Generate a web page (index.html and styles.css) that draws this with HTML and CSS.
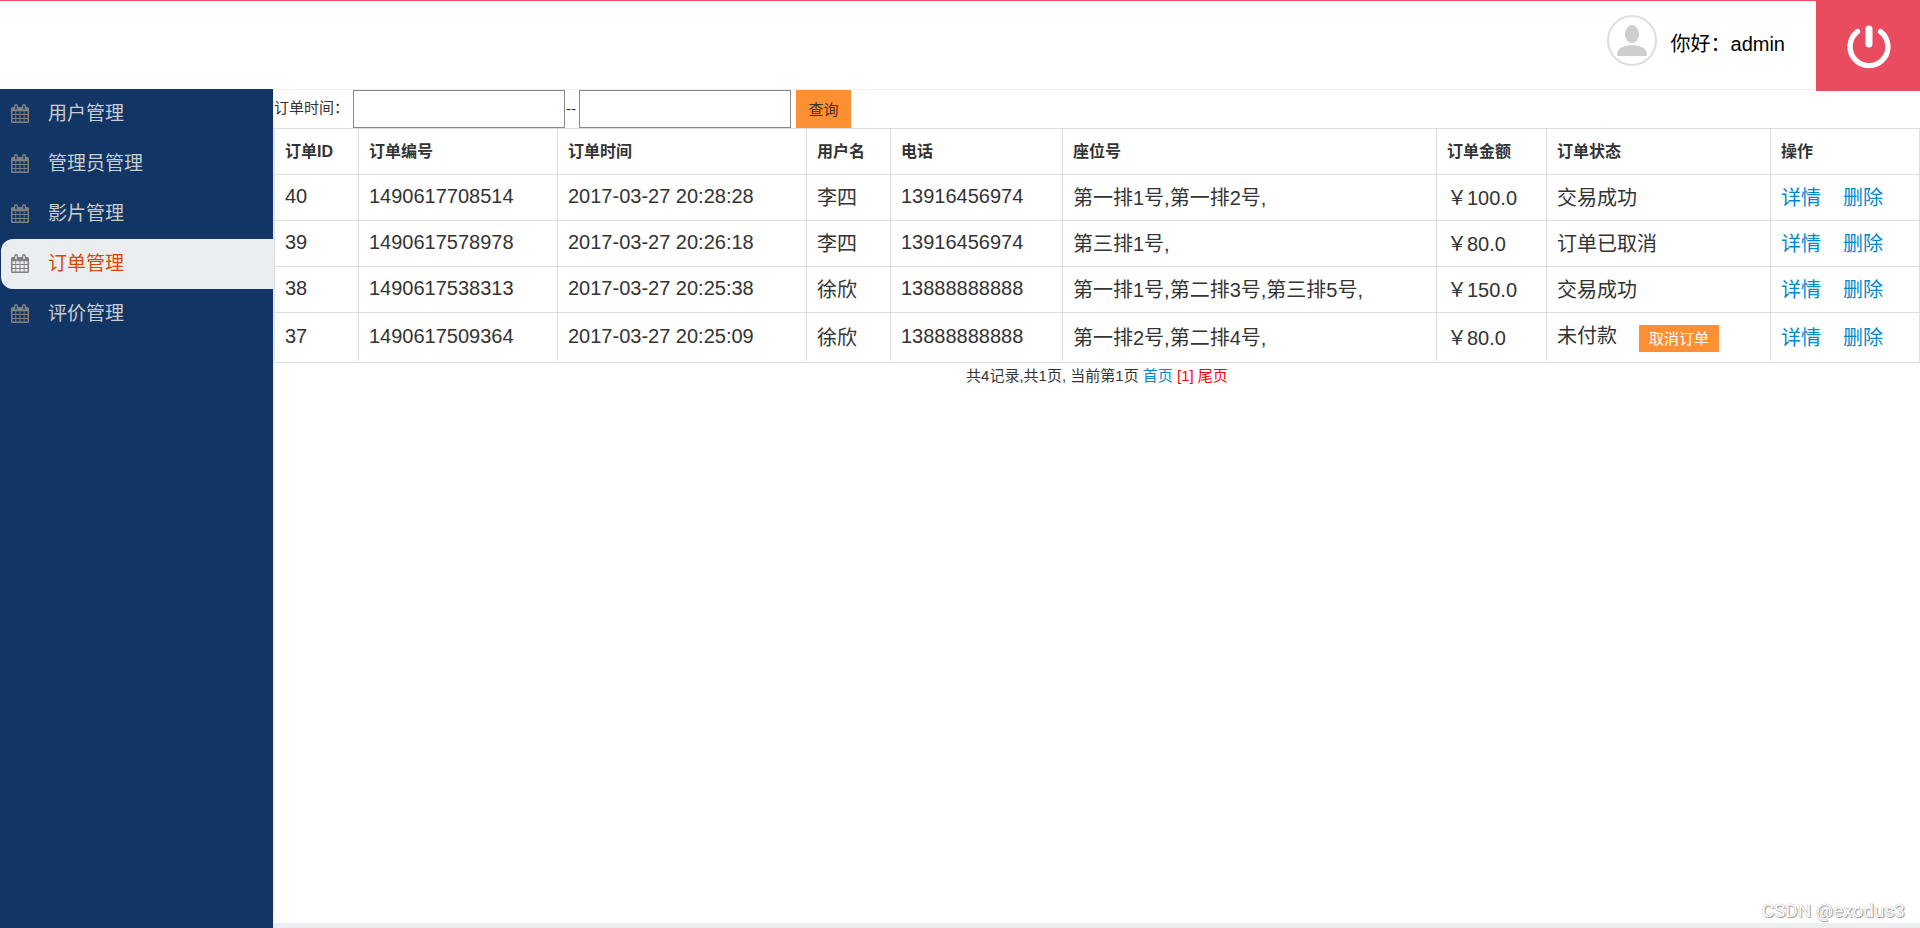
FILE: index.html
```html
<!DOCTYPE html>
<html lang="zh-CN">
<head>
<meta charset="utf-8">
<title>订单管理</title>
<link rel="stylesheet" href="styles.css">
</head>
<body>
<svg class="defs" aria-hidden="true">
  <symbol id="calendar" viewBox="0 0 18 20">
    <path fill="currentColor" fill-rule="evenodd" d="M3 3V2a2 2 0 0 1 4 0v1h4V2a2 2 0 0 1 4 0v1h1.500a1.500 1.500 0 0 1 1.500 1.500v13a1.500 1.500 0 0 1-1.500 1.500h-15a1.500 1.500 0 0 1-1.500-1.500v-13a1.500 1.500 0 0 1 1.500-1.500zM4.300 1.800v3.400h1.400V1.800zM12.300 1.800v3.400h1.400V1.800zM1.500 7.200v2.900h2.800V7.200zM5.200 7.200v2.900h3.300V7.200zM9.400 7.200v2.900h3.300V7.200zM13.600 7.200v2.900h2.900V7.200zM1.500 11v3h2.800v-3zM5.200 11v3h3.300v-3zM9.400 11v3h3.300v-3zM13.600 11v3h2.900v-3zM1.500 14.900v2.700h2.800v-2.700zM5.200 14.900v2.700h3.300v-2.700zM9.400 14.900v2.700h3.300v-2.700zM13.600 14.900v2.700h2.900v-2.700z"/>
  </symbol>
</svg>
<div class="page">
  <header class="topbar">
    <div class="user">
      <svg class="avatar" viewBox="0 0 50 51" aria-hidden="true">
        <ellipse cx="25" cy="25.500" rx="24" ry="24.500" fill="#fff" stroke="#ddd" stroke-width="2"/>
        <ellipse cx="25" cy="19" rx="7" ry="9" fill="#cecece"/>
        <path d="M10 39.500c0-6 7-9.500 15-9.500s15 3.500 15 9.500q0 1.500-1.500 1.500h-27q-1.500 0-1.500-1.500z" fill="#cecece"/>
      </svg>
      <span>你好：admin</span>
    </div>
    <button class="logout" type="button" aria-label="退出">
      <svg viewBox="0 0 44 44" aria-hidden="true" fill="none" stroke="#fff" stroke-linecap="round">
        <path d="M10.500 7.700A18.900 18.900 0 1 0 33.500 7.700" stroke-width="5.400"/>
        <path d="M22 5v15" stroke-width="7"/>
      </svg>
    </button>
  </header>
  <div class="body">
    <nav class="sidebar">
      <a class="item" href="#"><svg class="icon" aria-hidden="true"><use href="#calendar"/></svg>用户管理</a>
      <a class="item" href="#"><svg class="icon" aria-hidden="true"><use href="#calendar"/></svg>管理员管理</a>
      <a class="item" href="#"><svg class="icon" aria-hidden="true"><use href="#calendar"/></svg>影片管理</a>
      <a class="item active" href="#"><svg class="icon" aria-hidden="true"><use href="#calendar"/></svg>订单管理</a>
      <a class="item" href="#"><svg class="icon" aria-hidden="true"><use href="#calendar"/></svg>评价管理</a>
    </nav>
    <main class="content">
      <form class="search">
        <label for="from">订单时间：</label>
        <input id="from" type="text">
        <label class="dash" for="to">--</label>
        <input id="to" type="text">
        <button type="button">查询</button>
      </form>
      <div class="orders">
        <table>
          <colgroup><col class="c-id"><col class="c-no"><col class="c-time"><col class="c-user"><col class="c-tel"><col><col class="c-sum"><col class="c-state"><col class="c-act"></colgroup>
          <thead>
            <tr><th>订单ID</th><th>订单编号</th><th>订单时间</th><th>用户名</th><th>电话</th><th>座位号</th><th>订单金额</th><th>订单状态</th><th>操作</th></tr>
          </thead>
          <tbody>
            <tr><td>40</td><td>1490617708514</td><td>2017-03-27 20:28:28</td><td>李四</td><td>13916456974</td><td>第一排1号,第一排2号,</td><td>￥100.0</td><td>交易成功</td><td><a href="#">详情</a><a href="#">删除</a></td></tr>
            <tr><td>39</td><td>1490617578978</td><td>2017-03-27 20:26:18</td><td>李四</td><td>13916456974</td><td>第三排1号,</td><td>￥80.0</td><td>订单已取消</td><td><a href="#">详情</a><a href="#">删除</a></td></tr>
            <tr><td>38</td><td>1490617538313</td><td>2017-03-27 20:25:38</td><td>徐欣</td><td>13888888888</td><td>第一排1号,第二排3号,第三排5号,</td><td>￥150.0</td><td>交易成功</td><td><a href="#">详情</a><a href="#">删除</a></td></tr>
            <tr><td>37</td><td>1490617509364</td><td>2017-03-27 20:25:09</td><td>徐欣</td><td>13888888888</td><td>第一排2号,第二排4号,</td><td>￥80.0</td><td>未付款<button class="cancel" type="button">取消订单</button></td><td><a href="#">详情</a><a href="#">删除</a></td></tr>
          </tbody>
        </table>
      </div>
      <div class="pager">共4记录,共1页, 当前第1页 <a href="#">首页</a> <span class="red">[1]</span> <a class="red" href="#">尾页</a></div>
    </main>
  </div>
  <div class="watermark">CSDN @exodus3</div>
</div>
</body>
</html>
```
FILE: styles.css
```css
* { box-sizing: border-box; }

body {
  margin: 0;
  background: #fff;
  color: #333;
  font-family: "Liberation Sans", "Noto Sans CJK SC", sans-serif;
  font-size: 15px;
}

a { color: #0088cc; text-decoration: none; }
button, input { font: inherit; }
.defs { position: absolute; width: 0; height: 0; }

.page {
  display: flex;
  flex-direction: column;
  min-height: 100vh;
}

.topbar {
  display: flex;
  justify-content: flex-end;
  align-items: flex-start;
  height: 90px;
  border-top: 1px solid #e84c5e;
  border-bottom: 1px solid #eee;
}

.user {
  display: flex;
  align-items: center;
  gap: 14px;
  margin-right: 31px;
  padding-top: 14px;
  color: #000;
  font-size: 20px;
}
.user span { padding-top: 4px; }
.avatar { width: 50px; height: 51px; }

.logout {
  display: flex;
  justify-content: center;
  align-items: center;
  width: 104px;
  height: 91px;
  margin-top: -1px;
  padding: 0 0 0 2px;
  border: 0;
  background: #e84c5e;
  position: relative;
}
.logout svg { width: 44px; height: 44px; }

.body { display: flex; flex: 1; }

.sidebar {
  width: 273px;
  flex: none;
  margin-top: -1px;
  background: #113666;
}

.item {
  display: flex;
  align-items: center;
  gap: 19px;
  height: 50px;
  margin-left: 1px;
  padding: 0 10px 6px;
  border-radius: 12px 0 0 12px;
  color: #ccc;
  font-size: 19px;
}
.item.active { background: #ebeef0; color: #dd4400; }
.icon { width: 18px; height: 20px; margin-top: 6px; color: #808080; }

.content {
  flex: 1;
  min-width: 0;
  border-left: 1px solid #ebeef0;
  border-bottom: 5px solid #ebeef0;
}

.search {
  display: flex;
  align-items: stretch;
  height: 38px;
}
.search label { padding-top: 6px; width: 79px; }
.search .dash { width: 14px; padding-left: 1px; padding-top: 10px; }
.search input {
  width: 212px;
  padding: 0 8px;
  border: 1px solid #888;
  background: #fff;
}
.search button {
  width: 55px;
  margin-left: 5px;
  padding: 0 0 2px;
  border: 0;
  background: #ff8f33;
  color: #333;
}

.orders {
  border-right: 1px solid #ddd;
  border-bottom: 1px solid #ddd;
  padding-bottom: 1px;
}
table {
  width: 100%;
  table-layout: fixed;
  border-collapse: separate;
  border-spacing: 0;
}
th, td {
  height: 46px;
  padding: 0 10px 2px;
  border-top: 1px solid #ddd;
  border-left: 1px solid #ddd;
  text-align: left;
  white-space: nowrap;
}
th { padding-bottom: 4px; font-size: 16px; }
td { font-size: 20px; }
tbody tr:last-child td { height: 49px; }
td a + a { margin-left: 22px; }

.c-id { width: 84px; }
.c-no { width: 199px; }
.c-time { width: 249px; }
.c-user { width: 84px; }
.c-tel { width: 172px; }
.c-sum { width: 110px; }
.c-state { width: 224px; }
.c-act { width: 149px; }

.cancel {
  height: 27px;
  margin-left: 22px;
  padding: 0 10px 2px;
  border: 0;
  background: #ff8f33;
  color: #fff;
  font-size: 15px;
  vertical-align: middle;
}

.pager { padding-top: 1px; text-align: center; }
.red { color: #f00; }

.watermark {
  position: absolute;
  right: 15px;
  bottom: 6px;
  color: #fff;
  font-family: Roboto, "Liberation Sans", sans-serif;
  font-size: 19px;
  text-shadow: 0 0 1px #888, 1px 1px 1px #999;
}
```
